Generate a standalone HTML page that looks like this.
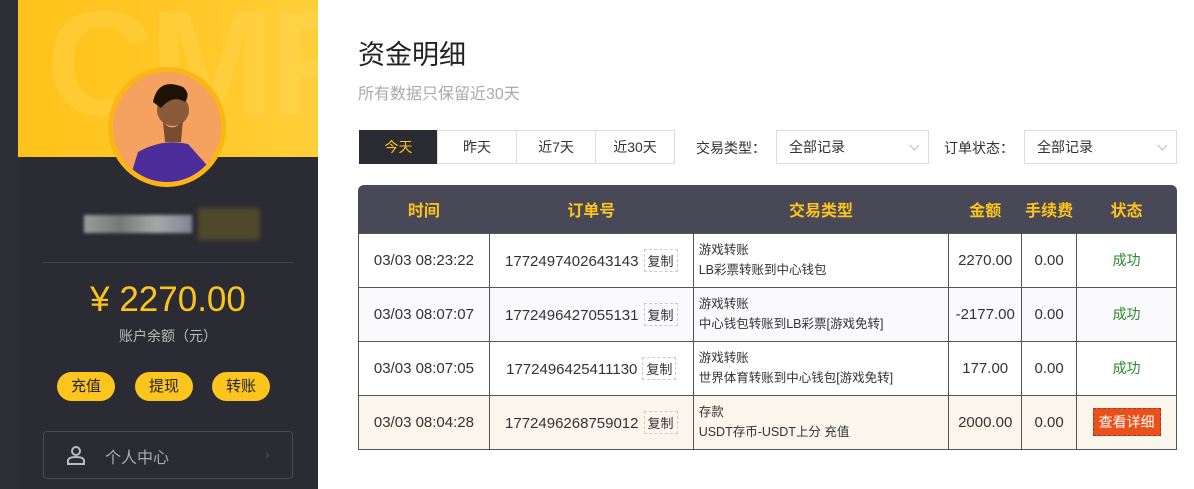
<!DOCTYPE html>
<html><head><meta charset="utf-8"><style>
*{box-sizing:border-box;margin:0;padding:0}
body{width:1194px;height:489px;overflow:hidden;background:#fff;font-family:"Liberation Sans","Noto Sans CJK SC",sans-serif;position:relative;color:#333}
.abs{position:absolute}
.side0{left:0;top:0;width:18px;height:489px;background:#2e2f36}
.panel{left:18px;top:0;width:300px;height:489px;background:#2a2b33}
.ban{left:18px;top:0;width:300px;height:157px;background:linear-gradient(90deg,#ffc21a,#ffc828 60%,#ffcf3a);overflow:hidden}
.cmf{position:absolute;left:28px;top:-12px;font-size:150px;font-weight:bold;color:rgba(255,220,100,.3);letter-spacing:-5px;line-height:150px}
.av{left:108px;top:67px;width:118px;height:120px;border-radius:50%;background:#f5a15f;border:5px solid #fbb514;overflow:hidden}
.btn{top:372px;height:29px;width:58px;border-radius:15px;background:#fcc51d;color:#222;font-size:15px;text-align:center;line-height:29px}
table{border-collapse:collapse;position:absolute;left:358px;top:185px;width:819px;font-size:15px}
th{color:#fcc51d;height:48px;font-size:16px;font-weight:bold;background:none}
td{border:1px solid #555;height:54px;text-align:center;color:#333}
td.t{text-align:left;padding-left:5px;font-size:12.5px;line-height:20px}
.cp{display:inline-block;border:1px dashed #ccc;padding:1px 3px;font-size:13px;margin-left:5px}
.ok{color:#2a8a2a;font-size:14px}
.tab{top:130px;height:34px;border:1px solid #ddd;text-align:center;line-height:32px;font-size:14px}
.sel{top:130px;height:34px;border:1px solid #ddd;font-size:14px;line-height:32px;padding-left:12px;color:#333}
.sel:after{content:"";position:absolute;right:10px;top:11px;width:6px;height:6px;border-right:1px solid #bbb;border-bottom:1px solid #bbb;transform:rotate(45deg)}
</style></head><body>
<div class="abs side0"></div>
<div class="abs panel"></div>
<div class="abs ban"><div class="cmf">CMF</div></div>
<div class="abs av"><svg width="110" height="112" viewBox="0 0 110 112"><path d="M15 112 L25 80 Q50 66 75 72 L100 100 L100 112Z" fill="#4c2d9a"/><circle cx="60" cy="38" r="16" fill="#8a5a3a"/><path d="M40 30 Q45 5 70 15 Q78 22 72 30 Q60 22 48 36Z" fill="#1b1208"/><path d="M50 50 Q60 62 70 48 L68 70 L52 70Z" fill="#7a4b2f"/></svg></div>
<div class="abs" style="left:84px;top:215px;width:108px;height:18px;background:linear-gradient(90deg,#ccc,#999,#ddd,#aab);opacity:.7;filter:blur(1.5px)"></div>
<div class="abs" style="left:198px;top:208px;width:62px;height:32px;background:#6b5a2a;opacity:.6;filter:blur(2px)"></div>
<div class="abs" style="left:43px;top:262px;width:250px;height:1px;background:#44454f"></div>
<div class="abs" style="left:18px;top:280px;width:300px;text-align:center;color:#fcc51d;font-size:35px;line-height:40px">¥ 2270.00</div>
<div class="abs" style="left:18px;top:326px;width:300px;text-align:center;color:#bbb;font-size:14px">账户余额（元）</div>
<div class="abs btn" style="left:57px">充值</div>
<div class="abs btn" style="left:135px">提现</div>
<div class="abs btn" style="left:212px">转账</div>
<div class="abs" style="left:43px;top:431px;width:250px;height:48px;border:1px solid #4a4b55;border-radius:4px"></div>
<svg class="abs" style="left:66px;top:445px" width="20" height="20" viewBox="0 0 20 20"><circle cx="10" cy="6" r="4" fill="none" stroke="#bbb" stroke-width="2"/><path d="M2 19 V16 Q2 12 10 12 Q18 12 18 16 V19Z" fill="none" stroke="#bbb" stroke-width="2"/></svg>
<div class="abs" style="left:105px;top:444px;color:#aaa;font-size:16px">个人中心</div>
<div class="abs" style="left:265px;top:446px;color:#555;font-size:14px">›</div>

<div class="abs" style="left:358px;top:33px;font-size:27px;color:#222">资金明细</div>
<div class="abs" style="left:358px;top:80px;font-size:16px;color:#aaa">所有数据只保留近30天</div>
<div class="abs tab" style="left:359px;width:79px;background:#2a2b33;color:#fcc51d;border-color:#2a2b33">今天</div>
<div class="abs tab" style="left:437px;width:80px">昨天</div>
<div class="abs tab" style="left:516px;width:80px">近7天</div>
<div class="abs tab" style="left:595px;width:80px">近30天</div>
<div class="abs" style="left:696px;top:138px;font-size:14px">交易类型：</div>
<div class="abs sel" style="left:776px;width:153px">全部记录</div>
<div class="abs" style="left:944px;top:138px;font-size:14px">订单状态：</div>
<div class="abs sel" style="left:1024px;width:153px">全部记录</div>

<div class="abs" style="left:358px;top:185px;width:819px;height:48px;background:#494856;border-radius:6px 6px 0 0"></div>
<table>
<colgroup><col style="width:131px"><col style="width:204px"><col style="width:256px"><col style="width:73px"><col style="width:55px"><col style="width:100px"></colgroup>
<tr><th>时间</th><th>订单号</th><th>交易类型</th><th>金额</th><th>手续费</th><th>状态</th></tr>
<tr><td>03/03 08:23:22</td><td>1772497402643143<span class="cp">复制</span></td><td class="t">游戏转账<br>LB彩票转账到中心钱包</td><td>2270.00</td><td>0.00</td><td class="ok">成功</td></tr>
<tr style="background:#fafafc"><td>03/03 08:07:07</td><td>1772496427055131<span class="cp">复制</span></td><td class="t">游戏转账<br>中心钱包转账到LB彩票[游戏免转]</td><td>-2177.00</td><td>0.00</td><td class="ok">成功</td></tr>
<tr><td>03/03 08:07:05</td><td>1772496425411130<span class="cp">复制</span></td><td class="t">游戏转账<br>世界体育转账到中心钱包[游戏免转]</td><td>177.00</td><td>0.00</td><td class="ok">成功</td></tr>
<tr style="background:#faf6ec"><td>03/03 08:04:28</td><td>1772496268759012<span class="cp">复制</span></td><td class="t">存款<br>USDT存币-USDT上分 充值</td><td>2000.00</td><td>0.00</td><td><span style="display:inline-block;background:#e8511a;color:#fff;padding:3px 5px;border:1px dashed #a33;font-size:14px">查看详细</span></td></tr>
</table>
</body></html>
